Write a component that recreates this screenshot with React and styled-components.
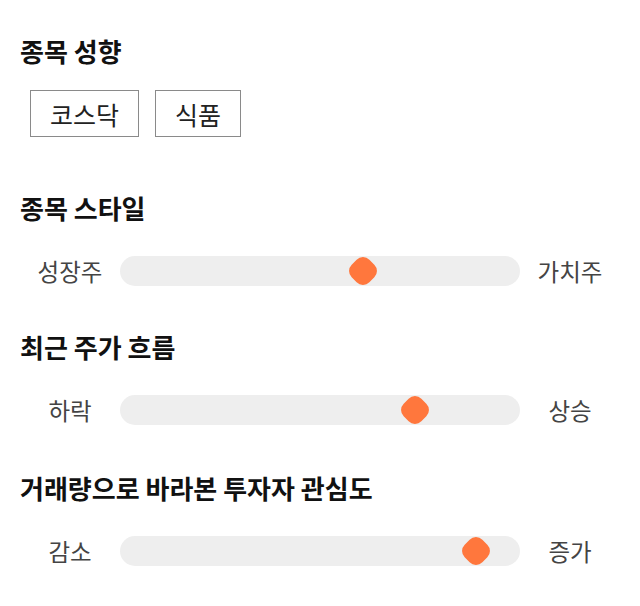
import React from "react";
import styled, { createGlobalStyle } from "styled-components";

const GlobalStyle = createGlobalStyle`
  body {
    margin: 0;
    background: #fff;
    font-family: "Noto Sans CJK KR", "Noto Sans", sans-serif;
  }
`;

//Page wrapper
const Page = styled.div`
  width: 640px;
  box-sizing: border-box;
  padding: 34px 20px 0;
  display: flex;
  flex-direction: column;
`;

const Section = styled.section`
  display: flex;
  flex-direction: column;
  margin-top: ${(p) => p.$gap || 0}px;
`;

//Bold section heading
const Title = styled.h3`
  margin: 0;
  font-size: 26px;
  font-weight: 700;
  line-height: 34px;
  color: #111;
`;

const TagRow = styled.div`
  display: flex;
  gap: 16px;
  padding-left: 10px;
  margin-top: 22px;
`;

const Tag = styled.div`
  height: 47px;
  box-sizing: border-box;
  padding: 0 19px;
  display: flex;
  align-items: center;
  border: 1px solid #8a8a8a;
  font-size: 25px;
  color: #222;
`;

//Label | track | label
const SliderRow = styled.div`
  display: grid;
  grid-template-columns: 100px 400px 100px;
  align-items: center;
  margin-top: 31px;
`;

const EndLabel = styled.span`
  text-align: center;
  font-size: 23.5px;
  color: #444;
  line-height: 30px;
`;

const Track = styled.div`
  position: relative;
  height: 30px;
  border-radius: 15px;
  background: #eeeeee;
`;

const Knob = styled.div`
  position: absolute;
  top: 50%;
  left: ${(p) => p.$pos}%;
  width: 25px;
  height: 25px;
  border-radius: 9px;
  background: #ff773d;
  transform: translate(-50%, -50%) rotate(45deg);
`;

const sliders = [
  { title: "종목 스타일", left: "성장주", right: "가치주", pos: 60.75, gap: 54 },
  { title: "최근 주가 흐름", left: "하락", right: "상승", pos: 73.75, gap: 44 },
  { title: "거래량으로 바라본 투자자 관심도", left: "감소", right: "증가", pos: 89, gap: 46 },
];

export default function App() {
  return (
    <>
      <GlobalStyle />
      <Page>
        <Section>
          <Title>종목 성향</Title>
          <TagRow>
            <Tag>코스닥</Tag>
            <Tag>식품</Tag>
          </TagRow>
        </Section>
        {sliders.map((s) => (
          <Section key={s.title} $gap={s.gap}>
            <Title>{s.title}</Title>
            <SliderRow>
              <EndLabel>{s.left}</EndLabel>
              <Track>
                <Knob $pos={s.pos} />
              </Track>
              <EndLabel>{s.right}</EndLabel>
            </SliderRow>
          </Section>
        ))}
      </Page>
    </>
  );
}
